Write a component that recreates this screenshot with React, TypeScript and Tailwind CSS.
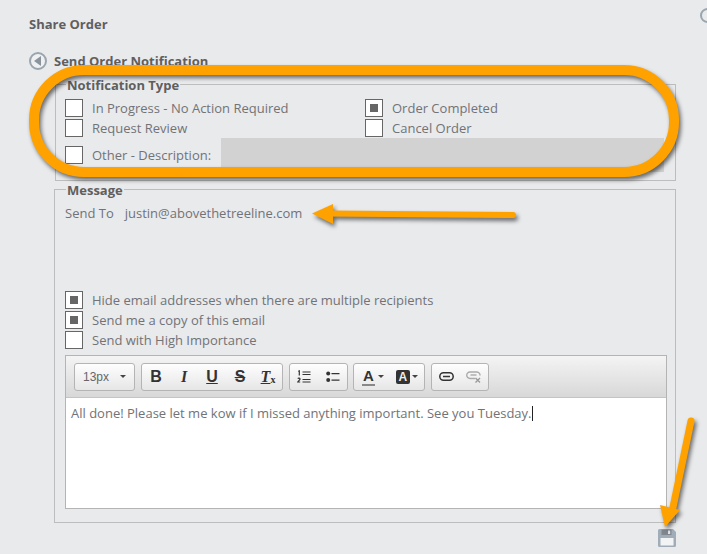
const FONT = "font-['Open_Sans',sans-serif]";

function Check({ on = false }: { on?: boolean }) {
  return (
    <span className="flex h-[18px] w-[18px] shrink-0 items-center justify-center border border-[#666] bg-white">
      {on && <span className="h-2 w-2 bg-[#666]" />}
    </span>
  );
}

function Option({ label, on, className = "" }: { label: string; on?: boolean; className?: string }) {
  return (
    <label className={`flex h-5 items-center gap-[9px] ${className}`}>
      <Check on={on} />
      <span>{label}</span>
    </label>
  );
}

function ToolGroup({ children, className = "" }: { children: React.ReactNode; className?: string }) {
  return (
    <div className={`flex h-[28px] items-center rounded-[3px] border border-[#b4b4b4] bg-gradient-to-b from-[#fefefe] to-[#e6e6e6] ${className}`}>
      {children}
    </div>
  );
}

function Glyph({ children, className = "" }: { children: React.ReactNode; className?: string }) {
  return <span className={`flex h-full items-center justify-center text-[#333] ${className}`}>{children}</span>;
}

function Caret() {
  return <span className="h-0 w-0 border-x-[3px] border-t-[3px] border-x-transparent border-t-[#444]" />;
}

function OrderedIcon() {
  return (
    <svg width="14" height="14" viewBox="0 0 14 14" fill="none" stroke="#333" strokeWidth="1.2">
      <path d="M5.500 2h8M5.500 4.500h8M5.500 9.500h8M5.500 12h8" />
      <path d="M1.300 1.400 2.300 1v4.500" />
      <path d="M.8 8.600c.6-.8 2.400-.6 2.200.6-.1.700-1.600 1.500-2.200 2.800h2.400" />
    </svg>
  );
}

function BulletIcon() {
  return (
    <svg width="14" height="12" viewBox="0 0 14 12" fill="#333">
      <circle cx="2.200" cy="2.600" r="2" />
      <circle cx="2.200" cy="9" r="2" />
      <path d="M5.500 2h8v1.200h-8zM5.500 8.500h8v1.200h-8z" />
    </svg>
  );
}

function LinkIcon() {
  return (
    <svg width="15" height="9" viewBox="0 0 15 9" fill="none" stroke="#333" strokeWidth="1.500">
      <rect x="0.800" y="0.800" width="13.400" height="7.400" rx="3.700" />
      <path d="M4 4.500h7" />
    </svg>
  );
}

function UnlinkIcon() {
  return (
    <svg width="15" height="12" viewBox="0 0 15 12" fill="none" stroke="#aaa" strokeWidth="1.400">
      <path d="M9 7.500H4a3.200 3.200 0 0 1 0-6.500h7a3.200 3.200 0 0 1 3 3.500" />
      <path d="M4.500 4h6" />
      <path d="M9.500 7l4.500 4.500M14 7l-4.500 4.500" stroke="#999" />
    </svg>
  );
}

function Annotations() {
  return (
    <svg className="pointer-events-none absolute top-0 left-0 drop-shadow-[2px_3px_2px_rgba(0,0,0,0.55)]" width="707" height="554" fill="none">
      <rect x="34" y="70" width="640" height="102" rx="50" stroke="#ffa200" strokeWidth="10" />
      <path d="M513 215 328 213.500" stroke="#ffa200" strokeWidth="6" strokeLinecap="round" />
      <path d="M312 213.500 333 204v20z" fill="#ffa200" />
      <path d="M691 421 672 512" stroke="#ffa200" strokeWidth="7" strokeLinecap="round" />
      <path d="M665 527 660 505 680 510z" fill="#ffa200" />
    </svg>
  );
}

function SaveIcon() {
  return (
    <svg width="18" height="18" viewBox="0 0 18 18">
      <path d="M0 1.500A1.500 1.500 0 0 1 1.500 0H15l3 3v13.500a1.500 1.500 0 0 1-1.500 1.500h-15A1.500 1.500 0 0 1 0 16.500z" fill="#a0acb8" />
      <rect x="3.500" y="0.500" width="10" height="5.500" fill="#80878f" />
      <rect x="10" y="1.500" width="2.200" height="3.500" fill="#dfe3e7" />
      <rect x="2.500" y="9" width="13" height="7.500" fill="#f2f3f4" />
    </svg>
  );
}

export default function App() {
  return (
    <div className={`relative h-[554px] w-[707px] overflow-hidden bg-[#e9eaec] text-[13px] leading-5 text-[#717377] ${FONT}`}>
      <div className="pt-[14px] pr-[31px] pl-[29px]">
        <h1 className="text-[13px] leading-5 font-bold text-[#5f5f5f]">Share Order</h1>

        <div className="mt-[17px] flex h-5 items-center gap-[7px]">
          <span className="flex h-[18px] w-[18px] items-center justify-center rounded-full border-2 border-[#9aa5ae] bg-[#eef0f1]">
            <span className="mr-[2px] h-0 w-0 border-y-[5px] border-r-[7px] border-y-transparent border-r-[#8a949c]" />
          </span>
          <h2 className="text-[13px] font-bold text-[#5f5f5f]">Send Order Notification</h2>
        </div>

        <fieldset className="mt-[6px] ml-[26px] h-[104px] border border-[#bdbdbd] pr-[10px] pl-[9px]">
          <legend className="ml-[1px] translate-y-[1px] px-[1px] text-[13px] leading-[14px] font-bold text-[#5f5f5f]">Notification Type</legend>
          <div className="mt-[7px] grid grid-cols-[300px_1fr]">
            <Option label="In Progress - No Action Required" />
            <Option label="Order Completed" on />
            <Option label="Request Review" />
            <Option label="Cancel Order" />
          </div>
          <div className="flex h-[34px] items-start">
            <Option label="Other - Description:" className="mt-[7px] w-[156px] shrink-0" />
            <div className="mr-[1px] h-[34px] flex-1 bg-[#d2d2d2]" />
          </div>
        </fieldset>

        <fieldset className="mt-[1px] ml-[25px] h-[341px] border border-[#bdbdbd] pr-2 pl-[10px]">
          <legend className="ml-[1px] translate-y-[1px] px-[1px] text-[13px] leading-[14px] font-bold text-[#5f5f5f]">Message</legend>
          <div className="mt-[7px] flex h-5 gap-[11px]">
            <span>Send To</span>
            <span>justin@abovethetreeline.com</span>
          </div>

          <div className="mt-[67px]">
            <Option label="Hide email addresses when there are multiple recipients" on />
            <Option label="Send me a copy of this email" on />
            <Option label="Send with High Importance" />
          </div>

          <div className="mt-[5px] border border-[#b4b4b4] bg-white">
            <div className="flex h-[42px] items-center gap-[5px] border-b border-[#c4c4c4] bg-gradient-to-b from-[#f4f4f4] to-[#d8d8d8] pl-2">
              <ToolGroup className="w-[61px] justify-center gap-[11px] font-['Liberation_Sans',sans-serif] text-[12px] text-[#666]">
                <span>13px</span>
                <Caret />
              </ToolGroup>
              <ToolGroup className="ml-[1px] w-[142px] font-['Liberation_Sans',sans-serif] text-[16px]">
                <Glyph className="w-[28px] font-bold">B</Glyph>
                <Glyph className="w-[28px] font-['Liberation_Serif',serif] font-bold italic">I</Glyph>
                <Glyph className="w-[28px] font-bold underline">U</Glyph>
                <Glyph className="w-[28px] font-bold line-through">S</Glyph>
                <Glyph className="w-[28px] font-['Liberation_Serif',serif] font-bold italic">
                  <span className="underline">T</span>
                  <span className="mt-[6px] text-[10px] not-italic">x</span>
                </Glyph>
              </ToolGroup>
              <ToolGroup className="ml-[1px] w-[59px]">
                <Glyph className="w-[29px]"><OrderedIcon /></Glyph>
                <Glyph className="w-[29px]"><BulletIcon /></Glyph>
              </ToolGroup>
              <ToolGroup className="w-[72px] pl-2 font-['Liberation_Sans',sans-serif] text-[15px] font-bold">
                <span className="border-b-2 border-[#888] px-[1px] leading-[16px] text-[#333]">A</span>
                <span className="mr-[12px] ml-[3px] flex"><Caret /></span>
                <span className="flex h-[14px] w-[14px] items-center justify-center rounded-[2px] bg-[#333] text-[12px] text-[#eee]">A</span>
                <span className="ml-[2px] flex"><Caret /></span>
              </ToolGroup>
              <ToolGroup className="ml-[1px] w-[58px] justify-center gap-[12px]">
                <LinkIcon />
                <UnlinkIcon />
              </ToolGroup>
            </div>
            <div className="h-[110px] px-[5px] py-[5px] text-[#717377]">
              All done! Please let me kow if I missed anything important. See you Tuesday.
              <span className="ml-[1px] inline-block h-[15px] w-px translate-y-[3px] bg-[#222]" />
            </div>
          </div>
        </fieldset>

        <div className="mt-[6px] flex justify-end">
          <SaveIcon />
        </div>
      </div>

      <span className="absolute top-[8px] right-[-8px] h-[15px] w-[15px] rounded-full border-2 border-[#9aa5ae]" />
      <Annotations />
    </div>
  );
}
